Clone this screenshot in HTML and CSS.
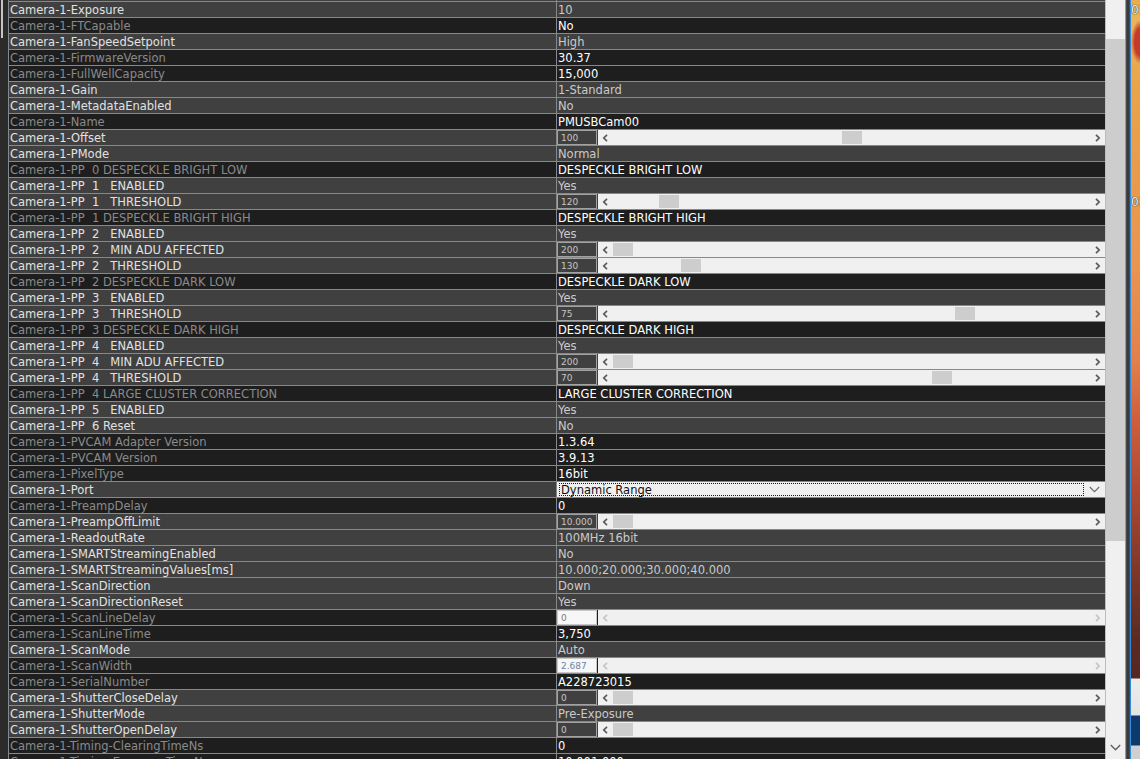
FILE: index.html
```html
<!DOCTYPE html>
<html>
<head>
<meta charset="utf-8">
<title>Property Browser</title>
<link rel="stylesheet" href="styles.css">
</head>
<body>
<div class="gutter"><div class="gutter-bar"></div></div>
<div class="grid">
  <div class="row tail"><div class="name"></div><div class="val"></div></div>
  <div class="row e"><div class="name">Camera-1-Exposure</div><div class="val">10</div></div>
  <div class="row ro"><div class="name">Camera-1-FTCapable</div><div class="val">No</div></div>
  <div class="row e"><div class="name">Camera-1-FanSpeedSetpoint</div><div class="val">High</div></div>
  <div class="row ro"><div class="name">Camera-1-FirmwareVersion</div><div class="val">30.37</div></div>
  <div class="row ro"><div class="name">Camera-1-FullWellCapacity</div><div class="val">15,000</div></div>
  <div class="row e"><div class="name">Camera-1-Gain</div><div class="val">1-Standard</div></div>
  <div class="row e"><div class="name">Camera-1-MetadataEnabled</div><div class="val">No</div></div>
  <div class="row ro"><div class="name">Camera-1-Name</div><div class="val">PMUSBCam00</div></div>
  <div class="row e"><div class="name">Camera-1-Offset</div><div class="val slider"><span class="box">100</span><div class="sb"><span class="arr"><svg width="7" height="8" viewBox="0 0 7 8"><path d="M5 0.8 L1.8 4 L5 7.2" fill="none" stroke="#5a5a5a" stroke-width="1.7"/></svg></span><div class="track"><span class="thumb" style="margin-left:229px"></span></div><span class="arr"><svg width="7" height="8" viewBox="0 0 7 8"><path d="M2 0.8 L5.2 4 L2 7.2" fill="none" stroke="#5a5a5a" stroke-width="1.7"/></svg></span></div></div></div>
  <div class="row e"><div class="name">Camera-1-PMode</div><div class="val">Normal</div></div>
  <div class="row ro"><div class="name">Camera-1-PP  0 DESPECKLE BRIGHT LOW</div><div class="val">DESPECKLE BRIGHT LOW</div></div>
  <div class="row e"><div class="name">Camera-1-PP  1   ENABLED</div><div class="val">Yes</div></div>
  <div class="row e"><div class="name">Camera-1-PP  1   THRESHOLD</div><div class="val slider"><span class="box">120</span><div class="sb"><span class="arr"><svg width="7" height="8" viewBox="0 0 7 8"><path d="M5 0.8 L1.8 4 L5 7.2" fill="none" stroke="#5a5a5a" stroke-width="1.7"/></svg></span><div class="track"><span class="thumb" style="margin-left:46px"></span></div><span class="arr"><svg width="7" height="8" viewBox="0 0 7 8"><path d="M2 0.8 L5.2 4 L2 7.2" fill="none" stroke="#5a5a5a" stroke-width="1.7"/></svg></span></div></div></div>
  <div class="row ro"><div class="name">Camera-1-PP  1 DESPECKLE BRIGHT HIGH</div><div class="val">DESPECKLE BRIGHT HIGH</div></div>
  <div class="row e"><div class="name">Camera-1-PP  2   ENABLED</div><div class="val">Yes</div></div>
  <div class="row e"><div class="name">Camera-1-PP  2   MIN ADU AFFECTED</div><div class="val slider"><span class="box">200</span><div class="sb"><span class="arr"><svg width="7" height="8" viewBox="0 0 7 8"><path d="M5 0.8 L1.8 4 L5 7.2" fill="none" stroke="#5a5a5a" stroke-width="1.7"/></svg></span><div class="track"><span class="thumb" style="margin-left:0px"></span></div><span class="arr"><svg width="7" height="8" viewBox="0 0 7 8"><path d="M2 0.8 L5.2 4 L2 7.2" fill="none" stroke="#5a5a5a" stroke-width="1.7"/></svg></span></div></div></div>
  <div class="row e"><div class="name">Camera-1-PP  2   THRESHOLD</div><div class="val slider"><span class="box">130</span><div class="sb"><span class="arr"><svg width="7" height="8" viewBox="0 0 7 8"><path d="M5 0.8 L1.8 4 L5 7.2" fill="none" stroke="#5a5a5a" stroke-width="1.7"/></svg></span><div class="track"><span class="thumb" style="margin-left:68px"></span></div><span class="arr"><svg width="7" height="8" viewBox="0 0 7 8"><path d="M2 0.8 L5.2 4 L2 7.2" fill="none" stroke="#5a5a5a" stroke-width="1.7"/></svg></span></div></div></div>
  <div class="row ro"><div class="name">Camera-1-PP  2 DESPECKLE DARK LOW</div><div class="val">DESPECKLE DARK LOW</div></div>
  <div class="row e"><div class="name">Camera-1-PP  3   ENABLED</div><div class="val">Yes</div></div>
  <div class="row e"><div class="name">Camera-1-PP  3   THRESHOLD</div><div class="val slider"><span class="box">75</span><div class="sb"><span class="arr"><svg width="7" height="8" viewBox="0 0 7 8"><path d="M5 0.8 L1.8 4 L5 7.2" fill="none" stroke="#5a5a5a" stroke-width="1.7"/></svg></span><div class="track"><span class="thumb" style="margin-left:342px"></span></div><span class="arr"><svg width="7" height="8" viewBox="0 0 7 8"><path d="M2 0.8 L5.2 4 L2 7.2" fill="none" stroke="#5a5a5a" stroke-width="1.7"/></svg></span></div></div></div>
  <div class="row ro"><div class="name">Camera-1-PP  3 DESPECKLE DARK HIGH</div><div class="val">DESPECKLE DARK HIGH</div></div>
  <div class="row e"><div class="name">Camera-1-PP  4   ENABLED</div><div class="val">Yes</div></div>
  <div class="row e"><div class="name">Camera-1-PP  4   MIN ADU AFFECTED</div><div class="val slider"><span class="box">200</span><div class="sb"><span class="arr"><svg width="7" height="8" viewBox="0 0 7 8"><path d="M5 0.8 L1.8 4 L5 7.2" fill="none" stroke="#5a5a5a" stroke-width="1.7"/></svg></span><div class="track"><span class="thumb" style="margin-left:0px"></span></div><span class="arr"><svg width="7" height="8" viewBox="0 0 7 8"><path d="M2 0.8 L5.2 4 L2 7.2" fill="none" stroke="#5a5a5a" stroke-width="1.7"/></svg></span></div></div></div>
  <div class="row e"><div class="name">Camera-1-PP  4   THRESHOLD</div><div class="val slider"><span class="box">70</span><div class="sb"><span class="arr"><svg width="7" height="8" viewBox="0 0 7 8"><path d="M5 0.8 L1.8 4 L5 7.2" fill="none" stroke="#5a5a5a" stroke-width="1.7"/></svg></span><div class="track"><span class="thumb" style="margin-left:319px"></span></div><span class="arr"><svg width="7" height="8" viewBox="0 0 7 8"><path d="M2 0.8 L5.2 4 L2 7.2" fill="none" stroke="#5a5a5a" stroke-width="1.7"/></svg></span></div></div></div>
  <div class="row ro"><div class="name">Camera-1-PP  4 LARGE CLUSTER CORRECTION</div><div class="val">LARGE CLUSTER CORRECTION</div></div>
  <div class="row e"><div class="name">Camera-1-PP  5   ENABLED</div><div class="val">Yes</div></div>
  <div class="row e"><div class="name">Camera-1-PP  6 Reset</div><div class="val">No</div></div>
  <div class="row ro"><div class="name">Camera-1-PVCAM Adapter Version</div><div class="val">1.3.64</div></div>
  <div class="row ro"><div class="name">Camera-1-PVCAM Version</div><div class="val">3.9.13</div></div>
  <div class="row ro"><div class="name">Camera-1-PixelType</div><div class="val">16bit</div></div>
  <div class="row e"><div class="name">Camera-1-Port</div><div class="val dd"><span class="focus">Dynamic Range</span><span class="dd-btn"><svg width="11" height="7" viewBox="0 0 11 7"><path d="M0.8 1 L5.5 5.7 L10.2 1" fill="none" stroke="#6a6a6a" stroke-width="1.1"/></svg></span></div></div>
  <div class="row ro"><div class="name">Camera-1-PreampDelay</div><div class="val">0</div></div>
  <div class="row e"><div class="name">Camera-1-PreampOffLimit</div><div class="val slider"><span class="box">10.000</span><div class="sb"><span class="arr"><svg width="7" height="8" viewBox="0 0 7 8"><path d="M5 0.8 L1.8 4 L5 7.2" fill="none" stroke="#5a5a5a" stroke-width="1.7"/></svg></span><div class="track"><span class="thumb" style="margin-left:0px"></span></div><span class="arr"><svg width="7" height="8" viewBox="0 0 7 8"><path d="M2 0.8 L5.2 4 L2 7.2" fill="none" stroke="#5a5a5a" stroke-width="1.7"/></svg></span></div></div></div>
  <div class="row e"><div class="name">Camera-1-ReadoutRate</div><div class="val">100MHz 16bit</div></div>
  <div class="row e"><div class="name">Camera-1-SMARTStreamingEnabled</div><div class="val">No</div></div>
  <div class="row e"><div class="name">Camera-1-SMARTStreamingValues[ms]</div><div class="val">10.000;20.000;30.000;40.000</div></div>
  <div class="row e"><div class="name">Camera-1-ScanDirection</div><div class="val">Down</div></div>
  <div class="row e"><div class="name">Camera-1-ScanDirectionReset</div><div class="val">Yes</div></div>
  <div class="row ro"><div class="name">Camera-1-ScanLineDelay</div><div class="val slider off"><span class="box">0</span><div class="sb"><span class="arr"><svg width="7" height="8" viewBox="0 0 7 8"><path d="M5 0.8 L1.8 4 L5 7.2" fill="none" stroke="#c4c4c4" stroke-width="1.7"/></svg></span><div class="track"></div><span class="arr"><svg width="7" height="8" viewBox="0 0 7 8"><path d="M2 0.8 L5.2 4 L2 7.2" fill="none" stroke="#c4c4c4" stroke-width="1.7"/></svg></span></div></div></div>
  <div class="row ro"><div class="name">Camera-1-ScanLineTime</div><div class="val">3,750</div></div>
  <div class="row e"><div class="name">Camera-1-ScanMode</div><div class="val">Auto</div></div>
  <div class="row ro"><div class="name">Camera-1-ScanWidth</div><div class="val slider off"><span class="box blue">2.687</span><div class="sb"><span class="arr"><svg width="7" height="8" viewBox="0 0 7 8"><path d="M5 0.8 L1.8 4 L5 7.2" fill="none" stroke="#c4c4c4" stroke-width="1.7"/></svg></span><div class="track"></div><span class="arr"><svg width="7" height="8" viewBox="0 0 7 8"><path d="M2 0.8 L5.2 4 L2 7.2" fill="none" stroke="#c4c4c4" stroke-width="1.7"/></svg></span></div></div></div>
  <div class="row ro"><div class="name">Camera-1-SerialNumber</div><div class="val">A228723015</div></div>
  <div class="row e"><div class="name">Camera-1-ShutterCloseDelay</div><div class="val slider"><span class="box">0</span><div class="sb"><span class="arr"><svg width="7" height="8" viewBox="0 0 7 8"><path d="M5 0.8 L1.8 4 L5 7.2" fill="none" stroke="#5a5a5a" stroke-width="1.7"/></svg></span><div class="track"><span class="thumb" style="margin-left:0px"></span></div><span class="arr"><svg width="7" height="8" viewBox="0 0 7 8"><path d="M2 0.8 L5.2 4 L2 7.2" fill="none" stroke="#5a5a5a" stroke-width="1.7"/></svg></span></div></div></div>
  <div class="row e"><div class="name">Camera-1-ShutterMode</div><div class="val">Pre-Exposure</div></div>
  <div class="row e"><div class="name">Camera-1-ShutterOpenDelay</div><div class="val slider"><span class="box">0</span><div class="sb"><span class="arr"><svg width="7" height="8" viewBox="0 0 7 8"><path d="M5 0.8 L1.8 4 L5 7.2" fill="none" stroke="#5a5a5a" stroke-width="1.7"/></svg></span><div class="track"><span class="thumb" style="margin-left:0px"></span></div><span class="arr"><svg width="7" height="8" viewBox="0 0 7 8"><path d="M2 0.8 L5.2 4 L2 7.2" fill="none" stroke="#5a5a5a" stroke-width="1.7"/></svg></span></div></div></div>
  <div class="row ro"><div class="name">Camera-1-Timing-ClearingTimeNs</div><div class="val">0</div></div>
  <div class="row ro"><div class="name">Camera-1-Timing-ExposureTimeNs</div><div class="val">10,001,000</div></div>
</div>
<div class="vscroll">
  <div class="vs-space"></div>
  <div class="vs-thumb"></div>
  <div class="vs-fill"></div>
  <div class="vs-down"><svg width="11" height="7" viewBox="0 0 11 7"><path d="M0.8 1 L5.5 5.7 L10.2 1" fill="none" stroke="#606060" stroke-width="1.4"/></svg></div>
</div>
<div class="frame"></div>
<div class="desktop"><span class="clock c1">01</span><span class="clock c2">02</span></div>
</body>
</html>
```

FILE: styles.css
```css
html, body {
  margin: 0;
  padding: 0;
}
body {
  width: 1140px;
  height: 759px;
  overflow: hidden;
  display: flex;
  background: #2a2a2a;
  font-family: "DejaVu Sans", "Liberation Sans", sans-serif;
  font-size: 11.5px;
}

.gutter {
  width: 8px;
  flex: none;
  background: #2b2b2b;
}
.gutter-bar {
  margin-left: 1px;
  width: 2px;
  height: 38px;
  background: #c4c4c4;
}

.grid {
  width: 1097px;
  flex: none;
  display: flex;
  flex-direction: column;
  background: #1e1e1e;
}

.row {
  flex: none;
  display: grid;
  grid-template-columns: 547px 548px;
  column-gap: 1px;
  height: 15px;
  background: #888888;
  border-top: 1px solid #888888;
  border-left: 1px solid #888888;
}
.row.tail {
  height: 1px;
  border-top: 0;
}
.row.tail > div {
  background: #404040;
  padding: 0;
}

.name, .val {
  box-sizing: border-box;
  height: 15px;
  padding-top: 1px;
  line-height: 15px;
  white-space: pre;
  overflow: hidden;
  padding-left: 1px;
}
.row.e > div {
  background: #404040;
}
.row.ro > div {
  background: #1e1e1e;
}
.e .name {
  color: #e2e2e2;
}
.ro .name {
  color: #8a8a8a;
}
.e .val {
  color: #cacaca;
}
.ro .val {
  color: #ffffff;
}

.val.slider {
  padding: 0;
  display: flex;
}
.box {
  flex: none;
  box-sizing: border-box;
  width: 40px;
  height: 15px;
  border: 1px solid #a2a2a2;
  padding-left: 3px;
  padding-top: 1px;
  font-size: 9px;
  line-height: 13px;
  color: #c6c6c6;
  background: #404040;
  overflow: hidden;
}
.off .box {
  background: #f7f7f7;
  border-color: #c8c8c8;
  color: #7a7a7a;
}
.off .box.blue {
  color: #6c84a6;
}
.sb {
  flex: none;
  width: 507px;
  margin-left: 1px;
  height: 15px;
  background: #f0f0f0;
  display: flex;
}
.arr {
  flex: none;
  width: 15px;
  height: 15px;
  display: flex;
  align-items: center;
  justify-content: center;
}
.track {
  flex: 1;
  height: 15px;
  display: flex;
  align-items: center;
}
.thumb {
  flex: none;
  width: 20px;
  height: 13px;
  background: #cdcdcd;
}

.row.e > .val.dd {
  background: #f0f0f0;
  padding: 1px 0 1px 2px;
  display: flex;
}
.focus {
  flex: 1;
  box-sizing: border-box;
  height: 13px;
  border: 1px dotted #1a1a1a;
  padding-left: 1px;
  color: #101010;
  line-height: 12px;
}
.dd-btn {
  flex: none;
  width: 21px;
  display: flex;
  align-items: center;
  justify-content: center;
}

.vscroll {
  flex: none;
  width: 20px;
  box-sizing: border-box;
  border-left: 1px solid #bdbdbd;
  background: #f0f0f0;
  display: flex;
  flex-direction: column;
}
.vs-space {
  height: 39px;
  flex: none;
}
.vs-thumb {
  height: 502px;
  flex: none;
  background: #cdcdcd;
}
.vs-fill {
  flex: 1;
}
.vs-down {
  flex: none;
  height: 12px;
  display: flex;
  justify-content: center;
  align-items: flex-start;
  padding-bottom: 3px;
}

.frame {
  flex: none;
  width: 6px;
  background: linear-gradient(to right, #9a9a9a 0, #9a9a9a 1px, #5a5a5a 1px, #3a3a3a 2px, #3a3a3a 4px, #4a4a4a 4px, #4a4a4a 5px, #2f8ae0 5px, #2f8ae0 6px);
}

.desktop {
  flex: none;
  width: 9px;
  position: relative;
  overflow: hidden;
  background:
    radial-gradient(ellipse 9px 22px at 9px 42px, #c53a2a 0, #c53a2a 60%, rgba(197,58,42,0) 100%),
    linear-gradient(to bottom, #e8aa4e 0, #ebb457 20px, #e9a54b 80px, #e99a4a 180px, #ea9650 260px, #e2804a 360px, #cf5e3c 420px, #a9462f 500px, #7a3526 580px, #5b2b22 640px, #552820 678px, #ececec 679px, #e4e4e4 715px, #0c3a6c 716px, #0c3a6c 745px, #cfcfcf 746px, #cfcfcf 759px);
}
.clock {
  position: absolute;
  left: 0;
  font-size: 12px;
  line-height: 12px;
  color: #f4f4f4;
  text-shadow: 0 0 1px #333, 0 0 1px #333;
}
.c1 {
  top: 4px;
}
.c2 {
  top: 196px;
}
```
